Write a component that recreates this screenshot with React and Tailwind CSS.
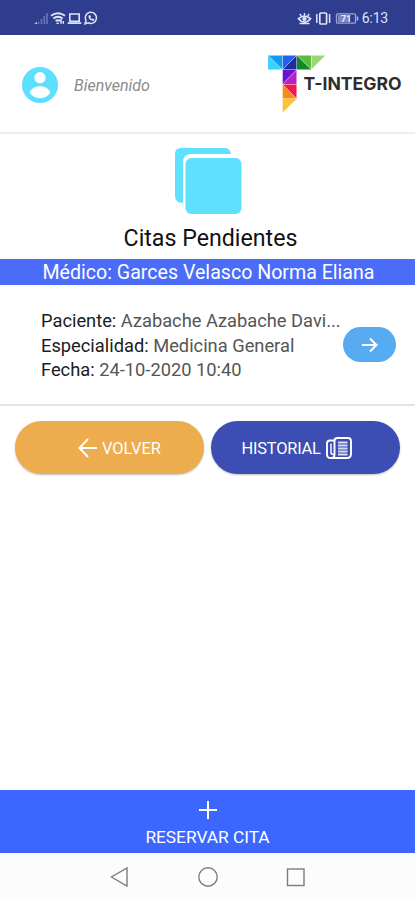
import React from "react";

function StatusBar() {
  return (
    <div className="flex h-[35px] shrink-0 items-center justify-between bg-[#2f3d8f] pl-[33px] pr-[27px] text-[#dfe3f7]">
      <svg width="66" height="16" viewBox="33 9.500 66 16" fill="none" stroke="currentColor">
        <g stroke="#6b77b8" strokeWidth="1.6">
          <path d="M38.5 21.5v2M41.5 18.5v5M44.3 15.5v8M47 12.5v11" />
        </g>
        <path d="M34 23.3l3-1.8v1.8z" fill="currentColor" stroke="none" />
        <path d="M51 15.2q7-5 14 0M53.3 18q4.700-3.500 9.400 0M55.600 20.600q2.400-1.800 4.800 0" strokeWidth="1.900" />
        <path d="M56.500 22.800h2.200M61 18.500v4.800M63.300 20.500v2.800" strokeWidth="1.500" />
        <path d="M69.800 13.500h9.400v7.200h-9.400zM67.700 22.600h13.600" strokeWidth="1.600" />
        <path d="M85 23.300l1-3.200a5.600 5.600 0 1 1 2.100 2.100z" strokeWidth="1.500" />
        <path d="M88.500 15.200q-.5 4.500 5 5.200l1-1.500-1.800-1-.9.7q-1-.6-1.400-1.600l.6-.8-.9-1.700z" fill="currentColor" stroke="none" />
      </svg>
      <div className="flex items-center">
        <svg width="62" height="16" viewBox="298 9.500 62 16" fill="none" stroke="currentColor">
          <path d="M299.500 18.200q6-5 12 0q-6 7-12 0z" strokeWidth="1.700" />
          <circle cx="305.500" cy="18.500" r="1.700" fill="currentColor" />
          <path d="M305.500 12.500v2.500M300.800 13.300l1.500 2.200M310.200 13.300l-1.500 2.200M300.500 23h10" strokeWidth="1.400" />
          <rect x="320.800" y="12.500" width="6.800" height="11" rx="1" strokeWidth="1.700" />
          <path d="M317.800 13.500v9M330.600 13.500v9" strokeWidth="1.500" />
          <rect x="337.500" y="13.300" width="19" height="9.400" rx="1" stroke="#9da6d6" strokeWidth="1.300" />
          <rect x="339" y="14.500" width="12" height="7" fill="#7c87c4" stroke="none" />
          <path d="M358.500 16v4" stroke="#b7bee3" strokeWidth="1.500" />
          <text x="342" y="21.500" fontFamily="Roboto, sans-serif" fontSize="9" fontWeight="700" fill="#e4e7f8" stroke="none">71</text>
        </svg>
        <span className="ml-[3px] mt-[2px] text-[14px] leading-[33px] tracking-[-0.200px]">6:13</span>
      </div>
    </div>
  );
}

function Logo() {
  return (
    <svg width="138" height="62" viewBox="266 53 138 62" role="img" aria-label="T-INTEGRO">
      <path d="M268 55.400v14h14.200z" fill="#3fd0fb" />
      <path d="M268 55.400h14.200v14z" fill="#0f9cf0" />
      <path d="M282.700 55.400h13.800l-13.800 14z" fill="#1d63ee" />
      <path d="M296.500 55.400v14h-13.800z" fill="#1d2f96" />
      <path d="M297 55.400v14h14.200z" fill="#0b8a2a" />
      <path d="M297 55.400h14.200v14z" fill="#55bd3a" />
      <path d="M311.700 55.400h13.600l-13.600 13.600z" fill="#97d970" />
      <path d="M282.700 70h13.800l-13.800 14z" fill="#6a11d8" />
      <path d="M296.500 70v14h-13.800z" fill="#b81fc4" />
      <path d="M282.700 84.500v14h13.800z" fill="#fb8b0c" />
      <path d="M282.700 84.500h13.800v14z" fill="#f5164e" />
      <path d="M282.700 99h13.800l-13.800 13.500z" fill="#fcc438" />
      <path d="M268 55.400l14.200 14M296.500 55.400l-13.800 14M297 55.400l14.200 14M296.500 70l-13.800 14M282.700 84.500l13.800 14" stroke="#fff" strokeOpacity=".55" strokeWidth=".7" />
      <text x="303.500" y="89.700" textLength="98" lengthAdjust="spacingAndGlyphs" fontFamily="Inter, sans-serif" fontWeight="700" fontSize="17.500" fill="#2d2d2d">T-INTEGRO</text>
    </svg>
  );
}

function Row({ label, value }) {
  return (
    <p className="truncate text-[#555]">
      <span className="text-[#1c1c1c]">{label}:</span> {value}
    </p>
  );
}

export default function App() {
  return (
    <div className="flex h-[900px] w-[415px] flex-col overflow-hidden bg-white font-[Roboto,sans-serif]">
      <StatusBar />
      <header className="flex h-[99px] shrink-0 items-center border-b-2 border-[#eeeeee] pl-[22px]">
        <svg className="mt-[3px]" width="36" height="36" viewBox="0 0 36 36">
          <circle cx="18" cy="18" r="18" fill="#5be0ff" />
          <circle cx="18" cy="10.700" r="5.600" fill="#fff" />
          <path d="M7.500 25.500c2-4.200 6-6.200 10.500-6.200s8.500 2 10.500 6.200c-2.500 3.600-6 5.700-10.500 5.700s-8-2.100-10.500-5.700z" fill="#fff" />
        </svg>
        <span className="ml-4 mt-[5px] w-[192px] text-[16px] italic text-[#8a8a8a]">Bienvenido</span>
        <Logo />
      </header>

      <section className="flex h-[125px] shrink-0 flex-col items-center pt-[14px]">
        <svg className="ml-[2px] shrink-0" width="67" height="66" viewBox="0 0 67 66" fill="#5fe0ff">
          <path d="M6 0h44q5 0 6 6H15q-7 1-7 8v41q-8 0-8-7V6q0-6 6-6z" />
          <rect x="10.500" y="10" width="56" height="56" rx="6" />
        </svg>
        <h1 className="ml-[6px] mt-[7px] whitespace-nowrap text-[23.200px] leading-[34px] text-[#111]">Citas Pendientes</h1>
      </section>

      <div className="h-[26px] shrink-0 whitespace-nowrap bg-[#4a6cf9] pl-[2px] text-center text-[19.600px] leading-[28px] text-white">
        Médico: Garces Velasco Norma Eliana
      </div>

      <section className="flex h-[121px] shrink-0 items-center border-b-2 border-[#e4e4e4] pl-[41px]">
        <div className="mt-[3px] w-[302px] text-[18.300px] leading-[24.500px]">
          <Row label="Paciente" value="Azabache Azabache Davi..." />
          <Row label="Especialidad" value="Medicina General" />
          <Row label="Fecha" value="24-10-2020 10:40" />
        </div>
        <button className="flex h-[35px] w-[53px] items-center justify-center rounded-full bg-[#57abf0]">
          <svg width="16" height="16" viewBox="0 0 16 16" fill="none" stroke="#fff" strokeWidth="2">
            <path d="M0 8h14M8 1.500L14.500 8 8 14.500" />
          </svg>
        </button>
      </section>

      <div className="flex shrink-0 gap-[7px] px-[15px] pt-[15px] text-[16.400px] text-white">
        <button className="flex h-[53px] w-[189px] items-center rounded-full bg-[#edac4e] pl-[63px] shadow-[0_1px_2px_rgba(0,0,0,0.25)]">
          <svg width="19" height="20" viewBox="0 0 19 20" fill="none" stroke="currentColor" strokeWidth="2">
            <path d="M19 10H2M10 1L1.500 10l8.500 9" />
          </svg>
          <span className="ml-[5px] mt-[3px]">VOLVER</span>
        </button>
        <button className="flex h-[53px] w-[190px] items-center rounded-full bg-[#3c4db4] pl-[31px] shadow-[0_1px_2px_rgba(0,0,0,0.25)]">
          <span className="mt-[3px] tracking-[-0.200px]">HISTORIAL</span>
          <svg className="ml-[5px]" width="26" height="22" viewBox="0 0 26 22" fill="none" stroke="currentColor" strokeWidth="1.900">
            <path d="M8.500 3.500H4Q1 3.500 1 6.500v11Q1 21 4.500 21H21q4 0 4-4V4q0-3-3-3H11.500q-3 0-3 3v13.500q0 3.500-3 3.500" />
            <path d="M5 6.500v9q0 2 3 2" strokeWidth="1.400" />
            <path d="M12 5.500h9.500M12 8.500h9.500M12 11.500h9.500M12 14.500h9.500M12 17.500h9.500" strokeWidth="1.800" strokeOpacity=".8" />
          </svg>
        </button>
      </div>

      <footer className="mt-auto shrink-0">
        <div className="flex h-[63px] flex-col items-center bg-[#3d66ff] pt-[11px] text-white">
          <svg className="shrink-0" width="18" height="18" viewBox="0 0 18 18" stroke="currentColor" strokeWidth="2">
            <path d="M9 0v18M0 9h18" />
          </svg>
          <span className="mt-[4px] text-[17.300px] leading-[28px]">RESERVAR CITA</span>
        </div>
        <nav className="flex h-[47px] items-center bg-[#fcfcfc] pl-[110px]">
          <svg width="196" height="22" viewBox="110 866 196 22" fill="none" stroke="#7d7d7d" strokeWidth="1.400">
            <path d="M127 868v18l-15.500-9z" />
            <circle cx="208" cy="877" r="9.200" />
            <rect x="287.500" y="869" width="16.500" height="16.500" />
          </svg>
        </nav>
      </footer>
    </div>
  );
}
